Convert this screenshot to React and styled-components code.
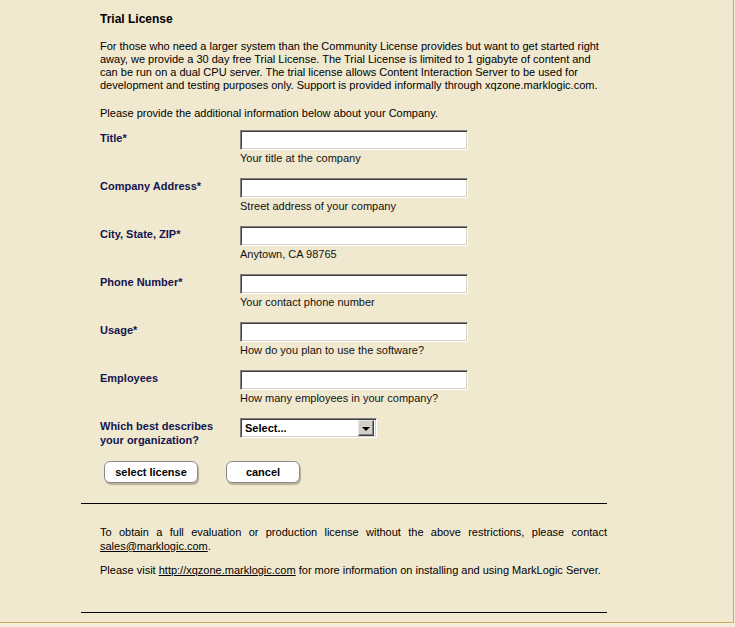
import React from "react";
import styled, { createGlobalStyle } from "styled-components";

const GlobalStyle = createGlobalStyle`
    html, body {
        margin: 0;
        padding: 0;
        background: #f4eedb;
    }
    body {
        font-family: "Liberation Sans", Arial, sans-serif;
        font-size: 11px;
        color: #000;
    }
`

const Frame = styled.div`
    width: 734px;
    height: 623px;
    box-sizing: border-box;
    background: #f1e9cf;
    border-right: 1px solid #d6a55c;
    border-bottom: 1px solid #d6a55c;
`

const Column = styled.div`
    margin-left: 81px;
    width: 526px;
    padding-top: 12px;
`

const Heading = styled.h2`
    margin: 0 0 14px 19px;
    font-size: 12px;
    line-height: 14px;
    font-weight: bold;
`

const Para = styled.p`
    margin: 0 0 ${(p) => p.$gap || 0}px 19px;
    line-height: ${(p) => p.$lh || 13}px;
    text-align: ${(p) => (p.$justify ? "justify" : "left")};
    a {
        color: #000;
        text-decoration: underline;
    }
`

const Form = styled.div`
    display: flex;
    flex-direction: column;
    margin-left: 19px;
`

const Row = styled.div`
    display: grid;
    grid-template-columns: 140px 1fr;
    height: ${(p) => p.$h || 48}px;
`

const Label = styled.label`
    font-weight: bold;
    color: #14144e;
    line-height: 14px;
    padding-top: ${(p) => p.$pt ?? 1}px;
`

const Field = styled.div`
    display: flex;
    flex-direction: column;
    gap: 2px;
`

const Input = styled.input`
    width: 228px;
    height: 20px;
    box-sizing: border-box;
    margin: 0;
    padding: 1px 3px;
    background: #fff;
    border: 1px solid;
    border-color: #808080 #ffffff #ffffff #808080;
    box-shadow: inset 1px 1px 0 #404040, inset -1px -1px 0 #d4d0c8;
    font: inherit;
    outline: none;
`

const Hint = styled.span`
    line-height: 13px;
    color: #111;
`

const SelectBox = styled.div`
    display: flex;
    align-items: center;
    width: 137px;
    height: 20px;
    box-sizing: border-box;
    background: #fff;
    border: 1px solid;
    border-color: #808080 #ffffff #ffffff #808080;
    box-shadow: inset 1px 1px 0 #404040, inset -1px -1px 0 #d4d0c8;
    padding: 2px;
`

const Select = styled.select`
    appearance: none;
    flex: 1;
    border: none;
    background: transparent;
    font: inherit;
    font-weight: bold;
    padding: 0 2px;
    height: 16px;
    outline: none;
    color: #000;
`

const ArrowButton = styled.span`
    width: 16px;
    height: 16px;
    box-sizing: border-box;
    background: #d4d0c8;
    border: 1px solid;
    border-color: #e8e6e0 #404040 #404040 #e8e6e0;
    box-shadow: inset -1px -1px 0 #808080;
    display: flex;
    align-items: center;
    justify-content: center;
    &::after {
        content: "";
        border-left: 4px solid transparent;
        border-right: 4px solid transparent;
        border-top: 4px solid #000;
        margin-top: 1px;
    }
`

const Buttons = styled.div`
    display: flex;
    gap: 28px;
    margin-left: 23px;
    margin-top: 1px;
`

const Button = styled.button`
    width: ${(p) => p.$w}px;
    height: 22px;
    box-sizing: border-box;
    background: #fff;
    border: 1px solid #8a8a8a;
    border-radius: 6px;
    box-shadow: 1px 2px 1px #b9b09a;
    font-family: "Liberation Sans", Arial, sans-serif;
    font-size: 11px;
    font-weight: bold;
    color: #000;
    padding: 0;
    cursor: pointer;
`

const Rule = styled.hr`
    margin: ${(p) => p.$top}px 0 ${(p) => p.$bottom || 0}px 0;
    border: none;
    border-top: 1px solid #000;
    height: 0;
`

const fields = [
    { label: "Title*", hint: "Your title at the company" },
    { label: "Company Address*", hint: "Street address of your company" },
    { label: "City, State, ZIP*", hint: "Anytown, CA 98765" },
    { label: "Phone Number*", hint: "Your contact phone number" },
    { label: "Usage*", hint: "How do you plan to use the software?" },
    { label: "Employees", hint: "How many employees in your company?" },
]

const App = () => {
    return (
        <>
            <GlobalStyle />
            <Frame>
                <Column>
                    <Heading>Trial License</Heading>
                    <Para $gap={15}>
                        For those who need a larger system than the Community License provides but want to get started right<br />
                        away, we provide a 30 day free Trial License. The Trial License is limited to 1 gigabyte of content and<br />
                        can be run on a dual CPU server. The trial license allows Content Interaction Server to be used for<br />
                        development and testing purposes only. Support is provided informally through xqzone.marklogic.com.
                    </Para>
                    <Para $gap={10}>Please provide the additional information below about your Company.</Para>
                    <Form>
                        {fields.map((f) => (
                            <Row key={f.label}>
                                <Label>{f.label}</Label>
                                <Field>
                                    <Input type="text" />
                                    <Hint>{f.hint}</Hint>
                                </Field>
                            </Row>
                        ))}
                        <Row $h={42}>
                            <Label>
                                Which best describes<br />your organization?
                            </Label>
                            <Field>
                                <SelectBox>
                                    <Select defaultValue="">
                                        <option value="">Select...</option>
                                    </Select>
                                    <ArrowButton />
                                </SelectBox>
                            </Field>
                        </Row>
                    </Form>
                    <Buttons>
                        <Button $w={94}>select license</Button>
                        <Button $w={74}>cancel</Button>
                    </Buttons>
                    <Rule $top={20} $bottom={21} />
                    <Para $lh={14} $gap={10} $justify>
                        To obtain a full evaluation or production license without the above restrictions, please contact <a href="#">sales@marklogic.com</a>.
                    </Para>
                    <Para $lh={14}>
                        Please visit <a href="#">http://xqzone.marklogic.com</a> for more information on installing and using MarkLogic Server.
                    </Para>
                    <Rule $top={35} />
                </Column>
            </Frame>
        </>
    )
}

export default App;
